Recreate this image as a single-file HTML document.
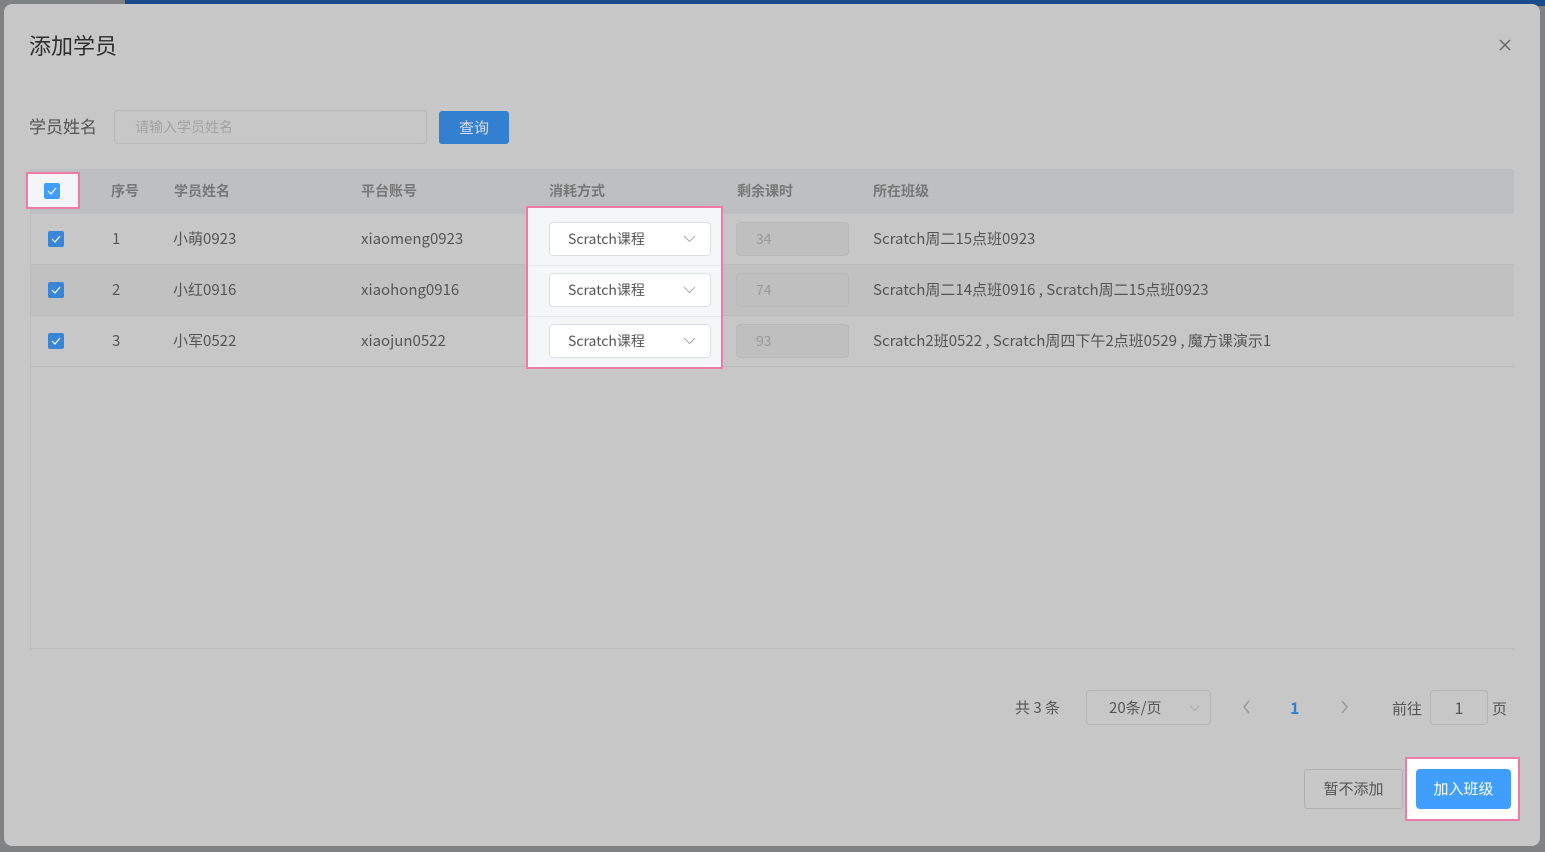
<!DOCTYPE html>
<html><head><meta charset="utf-8"><style>
*{box-sizing:border-box;margin:0;padding:0}
body{width:1545px;height:852px;background:#808182;position:relative;overflow:hidden;font-family:"Noto Sans CJK SC","Liberation Sans",sans-serif;color:#555}
.topbar{position:absolute;left:125px;top:0;width:1420px;height:6px;background:#1a4a8a}
.dlg{position:absolute;left:4px;top:4px;width:1536px;height:842px;background:#c7c7c7;border-radius:8px}
.a{position:absolute}
.title{left:25px;top:26px;font-size:22px;line-height:30px;color:#2e2e2e}
.cb{width:16px;height:16px;background:#3a86d6;border-radius:2px}
.cb svg{position:absolute;left:3px;top:4px}
.hdr{left:26px;top:165px;width:1484px;height:45px;background:#bebfc0}
.row{left:26px;width:1484px;height:51px;border-bottom:1px solid #bbbbbb}
.th{font-size:14px;font-weight:bold;color:#777;top:177px;line-height:20px}
.td{font-size:15px;color:#555;line-height:20px}
.sel{width:162px;height:34px;background:#fff;border:1px solid #dcdfe6;border-radius:4px;font-size:14px;color:#555;padding-left:18px;line-height:32px}
.sel svg{position:absolute;right:14px;top:12px}
.num{width:113px;height:34px;background:#bfbfc0;border:1px solid #b9b9bb;border-radius:4px;font-size:14px;color:#999;padding-left:19px;line-height:32px}
</style></head><body>
<div class="topbar"></div>
<div class="dlg">
<div class="a title">添加学员</div>
<svg class="a" style="left:1495px;top:35px" width="12" height="12"><path d="M1 1l10 10M11 1L1 11" stroke="#666" stroke-width="1.4"/></svg>
<div class="a" style="left:25px;top:110px;font-size:17px;line-height:24px;color:#555">学员姓名</div>
<div class="a" style="left:110px;top:106px;width:313px;height:34px;border:1px solid #b8b8ba;border-radius:4px;font-size:14px;color:#a3a3a3;padding-left:20px;line-height:32px">请输入学员姓名</div>
<div class="a" style="left:435px;top:107px;width:70px;height:33px;background:#3380d0;border-radius:3px;color:#dde;font-size:15px;text-align:center;line-height:33px">查询</div>

<div class="a hdr"></div>
<div class="a row" style="top:210px;background:#c7c7c7"></div>
<div class="a row" style="top:261px;background:#c1c1c1"></div>
<div class="a row" style="top:312px;background:#c7c7c7"></div>
<div class="a" style="left:26px;top:165px;width:1px;height:480px;background:#bdbdbd"></div>
<div class="a" style="left:26px;top:644px;width:1484px;height:1px;background:#bbb"></div>

<div class="a" style="left:22px;top:168px;width:54px;height:37px;background:#f4f5f7;border:2px solid #ee7aa6"></div>
<div class="a cb" style="left:40px;top:179px;background:#409eff"><svg width="10" height="8"><path d="M1 4l3 3 5-6" stroke="#fff" stroke-width="1.2" fill="none"/></svg></div>
<div class="a th" style="left:107px">序号</div>
<div class="a th" style="left:170px">学员姓名</div>
<div class="a th" style="left:357px">平台账号</div>
<div class="a th" style="left:545px">消耗方式</div>
<div class="a th" style="left:733px">剩余课时</div>
<div class="a th" style="left:869px">所在班级</div>

<div class="a" style="left:522px;top:202px;width:197px;height:163px;background:#f5f6f8;border:2px solid #ee7aa6"></div>
<div class="a" style="left:524px;top:261px;width:193px;height:1px;background:#e6e6ea"></div>
<div class="a" style="left:524px;top:312px;width:193px;height:1px;background:#e6e6ea"></div>

<div class="a cb" style="left:44px;top:227px"><svg width="10" height="8"><path d="M1 4l3 3 5-6" stroke="#fff" stroke-width="1.2" fill="none"/></svg></div>
<div class="a cb" style="left:44px;top:278px"><svg width="10" height="8"><path d="M1 4l3 3 5-6" stroke="#fff" stroke-width="1.2" fill="none"/></svg></div>
<div class="a cb" style="left:44px;top:329px"><svg width="10" height="8"><path d="M1 4l3 3 5-6" stroke="#fff" stroke-width="1.2" fill="none"/></svg></div>
<div class="a td" style="left:108px;top:225px">1</div>
<div class="a td" style="left:108px;top:276px">2</div>
<div class="a td" style="left:108px;top:327px">3</div>
<div class="a td" style="left:169px;top:225px">小萌0923</div>
<div class="a td" style="left:169px;top:276px">小红0916</div>
<div class="a td" style="left:169px;top:327px">小军0522</div>
<div class="a td" style="left:357px;top:225px">xiaomeng0923</div>
<div class="a td" style="left:357px;top:276px">xiaohong0916</div>
<div class="a td" style="left:357px;top:327px">xiaojun0522</div>
<div class="a sel" style="left:545px;top:218px">Scratch课程<svg width="13" height="8"><path d="M1 1l5.5 5.5L12 1" stroke="#aaa" fill="none"/></svg></div>
<div class="a sel" style="left:545px;top:269px">Scratch课程<svg width="13" height="8"><path d="M1 1l5.5 5.5L12 1" stroke="#aaa" fill="none"/></svg></div>
<div class="a sel" style="left:545px;top:320px">Scratch课程<svg width="13" height="8"><path d="M1 1l5.5 5.5L12 1" stroke="#aaa" fill="none"/></svg></div>
<div class="a num" style="left:732px;top:218px">34</div>
<div class="a num" style="left:732px;top:269px">74</div>
<div class="a num" style="left:732px;top:320px">93</div>
<div class="a td" style="left:869px;top:225px">Scratch周二15点班0923</div>
<div class="a td" style="left:869px;top:276px">Scratch周二14点班0916 , Scratch周二15点班0923</div>
<div class="a td" style="left:869px;top:327px">Scratch2班0522 , Scratch周四下午2点班0529 , 魔方课演示1</div>

<div class="a td" style="left:1011px;top:694px">共 3 条</div>
<div class="a" style="left:1082px;top:686px;width:125px;height:35px;border:1px solid #b5b5b7;border-radius:4px;font-size:15px;color:#555;padding-left:22px;line-height:33px">20条/页<svg style="position:absolute;right:10px;top:14px" width="11" height="7"><path d="M1 1l4.5 4.5L10 1" stroke="#aaa" fill="none"/></svg></div>
<svg class="a" style="left:1238px;top:696px" width="10" height="14"><path d="M7 1L2 7l5 6" stroke="#999" stroke-width="1.6" fill="none"/></svg>
<div class="a" style="left:1286px;top:693px;font-size:16px;line-height:20px;font-weight:bold;color:#2f7fd0">1</div>
<svg class="a" style="left:1335px;top:696px" width="10" height="14"><path d="M3 1l5 6-5 6" stroke="#999" stroke-width="1.6" fill="none"/></svg>
<div class="a td" style="left:1388px;top:695px">前往</div>
<div class="a" style="left:1426px;top:686px;width:58px;height:35px;border:1px solid #b5b5b7;border-radius:4px;font-size:16px;color:#555;text-align:center;line-height:33px">1</div>
<div class="a td" style="left:1488px;top:695px">页</div>

<div class="a" style="left:1300px;top:765px;width:99px;height:40px;border:1px solid #b0b0b2;border-radius:3px;font-size:15px;color:#555;text-align:center;line-height:38px">暂不添加</div>
<div class="a" style="left:1401px;top:753px;width:115px;height:64px;background:#fff;border:2px solid #ee7aa6"></div>
<div class="a" style="left:1412px;top:765px;width:95px;height:40px;background:#409eff;border-radius:4px;font-size:15px;color:#fff;text-align:center;line-height:40px">加入班级</div>
</div>
</body></html>
